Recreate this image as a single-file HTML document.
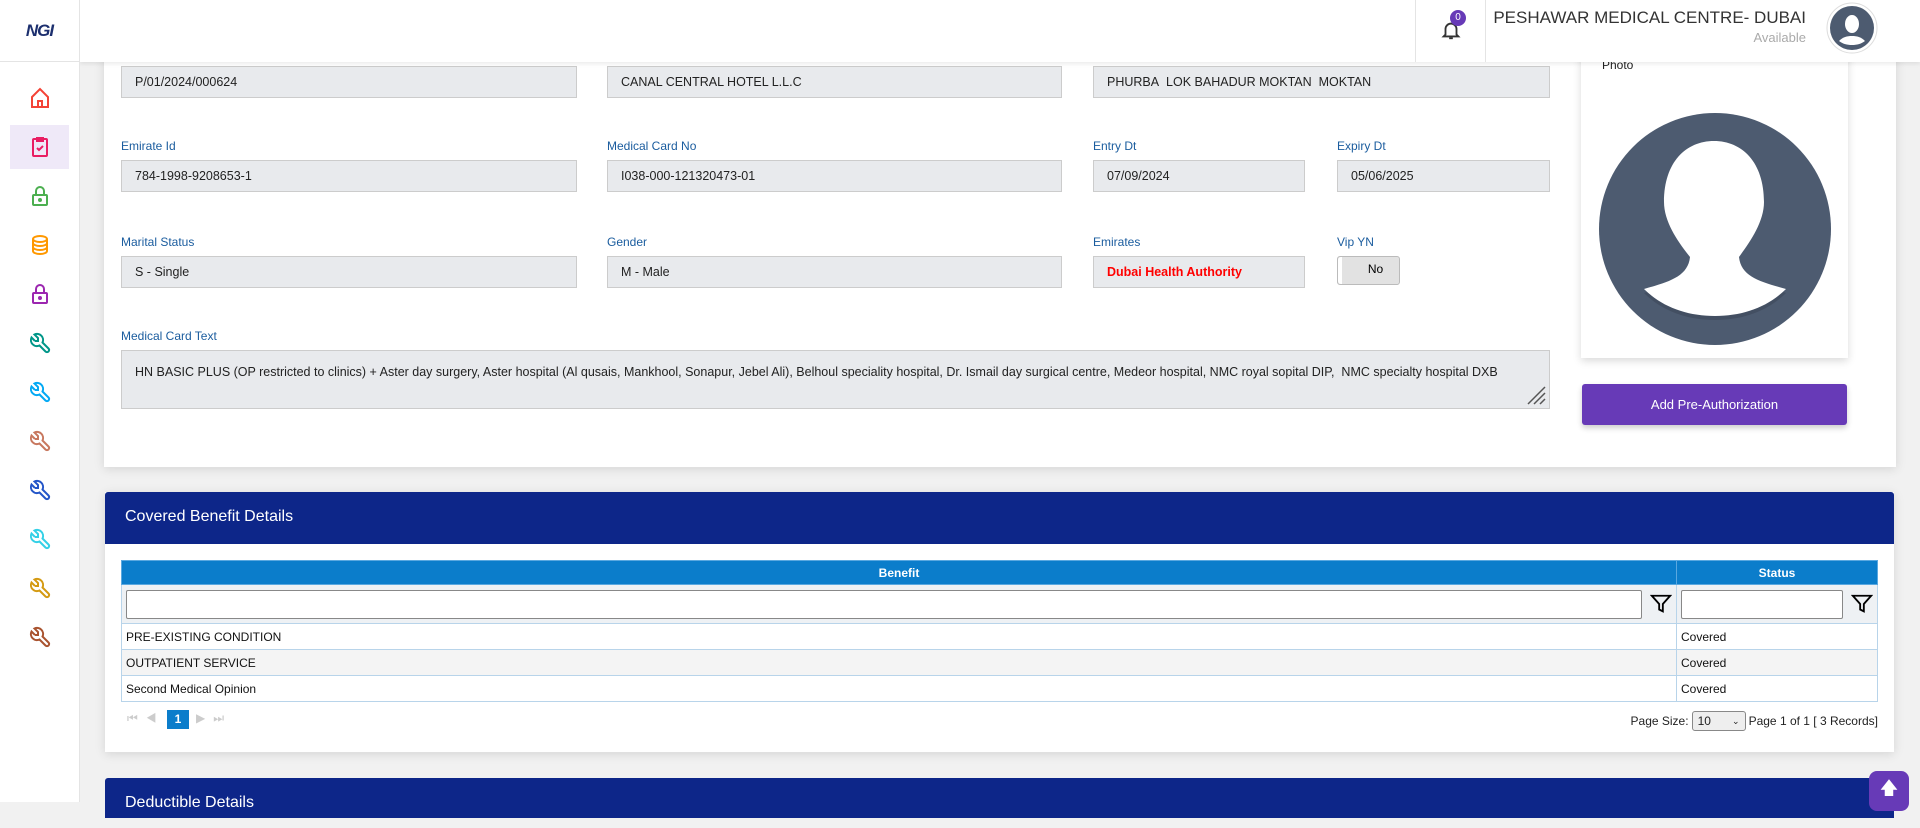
<!DOCTYPE html>
<html><head><meta charset="utf-8"><style>
*{box-sizing:border-box;margin:0;padding:0}
body{width:1920px;height:802px;overflow:hidden;background:#f1f1f1;font-family:"Liberation Sans",Arial,sans-serif;position:relative}
.side{position:absolute;left:0;top:0;width:80px;height:802px;background:#fff;border-right:1px solid #e4e4e4;z-index:5}
.logo{height:62px;border-bottom:1px solid #e4e4e4;display:flex;align-items:center;justify-content:center;font:italic bold 17px "Liberation Sans",sans-serif;color:#1c2f6e;letter-spacing:-1px}
.ic{position:absolute;left:28px;width:24px;height:24px}
.act{position:absolute;left:10px;top:125px;width:59px;height:44px;background:#efe9f8}
.hdr{position:absolute;left:80px;top:0;width:1840px;height:62px;background:#fff;box-shadow:0 2px 4px rgba(0,0,0,.08);z-index:4}
.card{position:absolute;background:#fff;box-shadow:0 2px 10px rgba(0,0,0,.12)}
.lbl{position:absolute;font-size:12px;color:#1a5c9e}
.inp{position:absolute;height:32px;background:#e8eaed;border:1px solid #ccc;font-size:12.5px;color:#222;padding:0 13px;line-height:30px;white-space:nowrap;overflow:hidden}
.ph{position:absolute;background:#fff;box-shadow:0 3px 8px rgba(0,0,0,.15)}
.btn{position:absolute;left:1582px;top:384px;width:265px;height:41px;background:#673ab7;border-radius:3px;color:#fff;font-size:13px;text-align:center;line-height:41px;box-shadow:0 3px 6px rgba(0,0,0,.2)}
.bh{position:absolute;background:#0d2689;color:#fff;font-size:16px;padding-left:20px;border-radius:3px 3px 0 0}
table{border-collapse:collapse;position:absolute;left:121px;top:560px;width:1757px;font-size:12px;table-layout:fixed}
th{background:#0b7dcb;color:#fff;height:24px;font-size:12px;border:1px solid #5aa8e0}
td{border:1px solid #b8d4ea;height:26px;padding-left:4px;color:#111}
tr.f td{background:#eef1f4;height:39px;padding:0 4px;border-color:#b8d4ea}
.fw{display:flex;align-items:center;gap:8px}
.fi{flex:1;height:29px;border:1px solid #888;background:#fff;border-radius:2px}
</style></head><body>
<div class="side">
<div class="logo">NGI</div>
<div class="act"></div>
<svg class="ic" style="top:86px" viewBox="0 0 24 24" fill="none" stroke="#f44336" stroke-width="2"><path d="M4 11l8-8 8 8v10H4z"/><path d="M10 21v-6h4v6"/></svg>
<svg class="ic" style="top:135px" viewBox="0 0 24 24" fill="none" stroke="#e91e63" stroke-width="2"><rect x="5" y="4" width="14" height="17" rx="1"/><path d="M9 3h6v3H9z" fill="#e91e63"/><path d="M9 13l2 2 4-4"/></svg>
<svg class="ic" style="top:184px" viewBox="0 0 24 24" fill="none" stroke="#4caf50" stroke-width="2"><rect x="5" y="11" width="14" height="10" rx="1"/><path d="M8 11V7a4 4 0 0 1 8 0v4"/><circle cx="12" cy="16" r="1" fill="#4caf50"/></svg>
<svg class="ic" style="top:233px" viewBox="0 0 24 24" fill="none" stroke="#ff9800" stroke-width="2"><ellipse cx="12" cy="6" rx="7" ry="3"/><path d="M5 6v12c0 1.7 3.1 3 7 3s7-1.3 7-3V6M5 10c0 1.7 3.1 3 7 3s7-1.3 7-3M5 14c0 1.7 3.1 3 7 3s7-1.3 7-3"/></svg>
<svg class="ic" style="top:282px" viewBox="0 0 24 24" fill="none" stroke="#9c27b0" stroke-width="2"><rect x="5" y="11" width="14" height="10" rx="1"/><path d="M8 11V7a4 4 0 0 1 8 0v4"/><circle cx="12" cy="16" r="1" fill="#9c27b0"/></svg>
<svg class="ic" style="top:331px" viewBox="0 0 24 24" fill="none" stroke="#009688" stroke-width="2"><path d="M7 10h3v-3l-3.5-3.5a6 6 0 0 1 8 8l6 6a2 2 0 0 1-3 3l-6-6a6 6 0 0 1-8-8l3.5 3.5"/></svg>
<svg class="ic" style="top:380px" viewBox="0 0 24 24" fill="none" stroke="#03a9f4" stroke-width="2"><path d="M7 10h3v-3l-3.5-3.5a6 6 0 0 1 8 8l6 6a2 2 0 0 1-3 3l-6-6a6 6 0 0 1-8-8l3.5 3.5"/></svg>
<svg class="ic" style="top:429px" viewBox="0 0 24 24" fill="none" stroke="#c8785f" stroke-width="2"><path d="M7 10h3v-3l-3.5-3.5a6 6 0 0 1 8 8l6 6a2 2 0 0 1-3 3l-6-6a6 6 0 0 1-8-8l3.5 3.5"/></svg>
<svg class="ic" style="top:478px" viewBox="0 0 24 24" fill="none" stroke="#2456c8" stroke-width="2"><path d="M7 10h3v-3l-3.5-3.5a6 6 0 0 1 8 8l6 6a2 2 0 0 1-3 3l-6-6a6 6 0 0 1-8-8l3.5 3.5"/></svg>
<svg class="ic" style="top:527px" viewBox="0 0 24 24" fill="none" stroke="#34d0e6" stroke-width="2"><path d="M7 10h3v-3l-3.5-3.5a6 6 0 0 1 8 8l6 6a2 2 0 0 1-3 3l-6-6a6 6 0 0 1-8-8l3.5 3.5"/></svg>
<svg class="ic" style="top:576px" viewBox="0 0 24 24" fill="none" stroke="#d49a12" stroke-width="2"><path d="M7 10h3v-3l-3.5-3.5a6 6 0 0 1 8 8l6 6a2 2 0 0 1-3 3l-6-6a6 6 0 0 1-8-8l3.5 3.5"/></svg>
<svg class="ic" style="top:625px" viewBox="0 0 24 24" fill="none" stroke="#a9532f" stroke-width="2"><path d="M7 10h3v-3l-3.5-3.5a6 6 0 0 1 8 8l6 6a2 2 0 0 1-3 3l-6-6a6 6 0 0 1-8-8l3.5 3.5"/></svg>
</div>

<div class="hdr">
<div style="position:absolute;left:1335px;top:0;width:1px;height:62px;background:#e4e4e4"></div>
<div style="position:absolute;left:1405px;top:0;width:1px;height:62px;background:#e4e4e4"></div>
<svg style="position:absolute;left:1360px;top:18px" width="22" height="24" viewBox="0 0 24 24" fill="none" stroke="#333" stroke-width="2"><path d="M6 17V11a6 6 0 0 1 12 0v6l2 2H4z"/><path d="M10 21h4"/></svg>
<div style="position:absolute;left:1370px;top:10px;width:16px;height:16px;border-radius:50%;background:#673ab7;color:#fff;font-size:10px;text-align:center;line-height:16px">0</div>
<div style="position:absolute;right:114px;top:8px;font-size:17px;color:#333;text-align:right">PESHAWAR MEDICAL CENTRE- DUBAI</div>
<div style="position:absolute;right:114px;top:30px;font-size:13px;color:#aaa">Available</div>
<svg style="position:absolute;left:1746px;top:2px" width="52" height="52" viewBox="0 0 52 52"><circle cx="26" cy="26" r="25" fill="#fff" stroke="#ddd"/><circle cx="26" cy="26" r="22" fill="#4d5b70"/><ellipse cx="26" cy="22" rx="7" ry="9" fill="#fff"/><path d="M13 39c4-4 8-5 13-5s9 1 13 5c-4 3-8 4-13 4s-9-1-13-4z" fill="#fff"/></svg>
</div>

<div class="card" style="left:104px;top:40px;width:1792px;height:427px"></div>
<div class="inp" style="left:121px;top:66px;width:456px">P/01/2024/000624</div>
<div class="inp" style="left:607px;top:66px;width:455px">CANAL CENTRAL HOTEL L.L.C</div>
<div class="inp" style="left:1093px;top:66px;width:457px">PHURBA&nbsp; LOK BAHADUR MOKTAN&nbsp; MOKTAN</div>
<div class="lbl" style="left:121px;top:139px">Emirate Id</div>
<div class="lbl" style="left:607px;top:139px">Medical Card No</div>
<div class="lbl" style="left:1093px;top:139px">Entry Dt</div>
<div class="lbl" style="left:1337px;top:139px">Expiry Dt</div>
<div class="inp" style="left:121px;top:160px;width:456px">784-1998-9208653-1</div>
<div class="inp" style="left:607px;top:160px;width:455px">I038-000-121320473-01</div>
<div class="inp" style="left:1093px;top:160px;width:212px">07/09/2024</div>
<div class="inp" style="left:1337px;top:160px;width:213px">05/06/2025</div>
<div class="lbl" style="left:121px;top:235px">Marital Status</div>
<div class="lbl" style="left:607px;top:235px">Gender</div>
<div class="lbl" style="left:1093px;top:235px">Emirates</div>
<div class="lbl" style="left:1337px;top:235px">Vip YN</div>
<div class="inp" style="left:121px;top:256px;width:456px">S - Single</div>
<div class="inp" style="left:607px;top:256px;width:455px">M - Male</div>
<div class="inp" style="left:1093px;top:256px;width:212px;color:#f00;font-weight:bold">Dubai Health Authority</div>
<div style="position:absolute;left:1337px;top:256px;width:63px;height:29px;background:#e2e2e2;border:1px solid #bbb;border-radius:3px;font-size:12px;text-align:center;line-height:25px;padding-left:14px">No<div style="position:absolute;left:0;top:0;width:4px;height:27px;background:#fff;border-radius:3px 0 0 3px"></div></div>
<div class="lbl" style="left:121px;top:329px">Medical Card Text</div>
<div class="inp" style="left:121px;top:350px;width:1429px;height:59px;line-height:16px;padding-top:13px">HN BASIC PLUS (OP restricted to clinics) + Aster day surgery, Aster hospital (Al qusais, Mankhool, Sonapur, Jebel Ali), Belhoul speciality hospital, Dr. Ismail day surgical centre, Medeor hospital, NMC royal sopital DIP,&nbsp; NMC specialty hospital DXB
<svg style="position:absolute;right:3px;bottom:3px" width="20" height="20" viewBox="0 0 20 20" stroke="#555" stroke-width="1.5"><path d="M2 19L19 2M8 19L19 8M14 19L19 14"/></svg></div>
<div class="ph" style="left:1581px;top:40px;width:267px;height:318px">
<div style="position:absolute;left:21px;top:18px;font-size:12px;color:#222">Photo</div>
<svg style="position:absolute;left:17px;top:72px" width="234" height="234" viewBox="0 0 234 234"><circle cx="117" cy="117" r="116" fill="#4d5b70"/><g transform="translate(0,5)"><path d="M46 176C70 168 90 162 92 140C80 125 66 105 66 85C66 45 88 24 116 24C144 24 166 45 166 85C166 105 152 125 141 140C143 162 163 168 188 176C170 194 145 203 117 203C89 203 64 194 46 176Z" fill="#434f62"/><path d="M46 172C70 165 90 160 92 140C80 125 66 105 66 85C66 45 88 24 116 24C144 24 166 45 166 85C166 105 152 125 141 140C143 160 163 165 188 172C170 190 145 199 117 199C89 199 64 190 46 172Z" fill="#fff"/></g></svg>
</div>
<div class="btn">Add Pre-Authorization</div>

<div class="card" style="left:105px;top:492px;width:1789px;height:260px"></div>
<div class="bh" style="left:105px;top:492px;width:1789px;height:52px;line-height:50px">Covered Benefit Details</div>
<table>
<colgroup><col style="width:1555px"><col></colgroup>
<tr><th>Benefit</th><th>Status</th></tr>
<tr class="f"><td><div class="fw"><span class="fi"></span><svg width="22" height="22" viewBox="0 0 24 24" fill="none" stroke="#000" stroke-width="2"><path d="M2 3h20l-8 9v8l-4-2v-6z"/></svg></div></td><td><div class="fw"><span class="fi"></span><svg width="22" height="22" viewBox="0 0 24 24" fill="none" stroke="#000" stroke-width="2"><path d="M2 3h20l-8 9v8l-4-2v-6z"/></svg></div></td></tr>
<tr><td>PRE-EXISTING CONDITION</td><td>Covered</td></tr>
<tr style="background:#f4f4f4"><td>OUTPATIENT SERVICE</td><td>Covered</td></tr>
<tr><td>Second Medical Opinion</td><td>Covered</td></tr>
</table>
<div style="position:absolute;left:127px;top:711px;font-size:12px;color:#ccc;letter-spacing:8px">⏮◀</div>
<div style="position:absolute;left:167px;top:710px;width:22px;height:19px;background:#0b7dcb;color:#fff;font-size:12px;font-weight:bold;text-align:center;line-height:19px">1</div>
<div style="position:absolute;left:196px;top:711px;font-size:12px;color:#ccc;letter-spacing:8px">▶⏭</div>
<div style="position:absolute;right:42px;top:711px;font-size:12px;color:#222;display:flex;align-items:center;gap:3px">Page Size: <span style="display:inline-block;width:54px;height:20px;border:1px solid #888;border-radius:3px;background:#eee;padding-left:5px;line-height:18px">10 <span style="float:right;margin-right:5px;font-size:9px">⌄</span></span> Page 1 of 1 [ 3 Records]</div>

<div class="bh" style="left:105px;top:778px;width:1789px;height:40px;line-height:50px">Deductible Details</div>
<div style="position:absolute;left:1869px;top:771px;width:40px;height:40px;background:#673ab7;border-radius:8px;color:#fff;text-align:center;font-size:18px;line-height:34px">🡅</div>
</body></html>
